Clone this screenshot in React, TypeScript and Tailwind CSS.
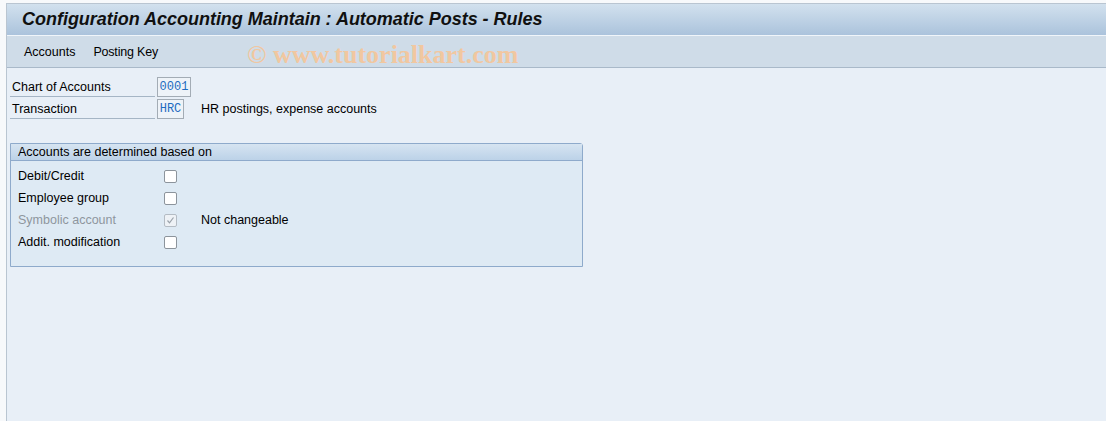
import React from "react";

const font = { fontFamily: '"Liberation Sans", Arial, sans-serif' };

function Check({ checked, disabled }: { checked?: boolean; disabled?: boolean }) {
  return (
    <div
      className={`w-[13px] h-[13px] rounded-[2px] border flex items-center justify-center ${
        disabled ? "border-[#b4bcc4] bg-[#eef2f6]" : "border-[#8c949c] bg-white"
      }`}
    >
      {checked && (
        <svg width="9" height="9" viewBox="0 0 9 9">
          <path d="M1.5 4.5 L3.5 6.8 L7.5 1.5" fill="none" stroke="#9aa2aa" strokeWidth="1.2" />
        </svg>
      )}
    </div>
  );
}

export default function App() {
  const rows = [
    { label: "Debit/Credit", checked: false },
    { label: "Employee group", checked: false },
    { label: "Symbolic account", checked: true, disabled: true, note: "Not changeable" },
    { label: "Addit. modification", checked: false },
  ];
  return (
    <div className="w-[1106px] h-[421px] bg-white overflow-hidden flex text-[12.5px] text-black" style={font}>
      <div className="w-[6px] bg-[#f7f9fb]" />
      <div className="flex-1 flex flex-col pt-[3px] bg-[#f7f9fb]">
        <div className="flex-1 flex flex-col border-t border-l border-[#b9c5d1]">
          <div className="h-[31px] bg-gradient-to-b from-[#d2e1ee] to-[#abc3dc] flex items-center pl-[15px]">
            <span className="text-[18px] font-bold italic text-[#101010] tracking-[-0.02px]">
              Configuration Accounting Maintain : Automatic Posts - Rules
            </span>
          </div>
          <div className="h-px bg-[#f0f5fa]" />
          <div className="h-[32px] bg-[#cfdce8] border-b border-[#a9b9c9] flex items-center pl-[17px] relative">
            <span className="pt-[2px]">Accounts</span>
            <span className="ml-[18px] pt-[2px] tracking-[-0.2px]">Posting Key</span>
            <span
              className="absolute left-[240px] top-[-1px] text-[26px] font-bold text-[#f1c7a0]"
              style={{ fontFamily: '"Liberation Serif", "Times New Roman", serif' }}
            >
              © www.tutorialkart.com
            </span>
          </div>
          <div className="flex-1 bg-[#e8eff7] pl-[3px] pt-[9px]">
            <div className="flex flex-col gap-[2px]">
              <div className="flex items-center h-[20px]">
                <div className="w-[145px] h-[20px] border-b border-[#a5b5c5] pl-[2px] flex items-center pt-[1px]">
                  Chart of Accounts
                </div>
                <div
                  className="ml-[2px] w-[34px] h-[20px] border border-[#a3acb5] bg-[#eef3f8] text-[#1e6cc0] flex items-center justify-center text-[12px]"
                  style={{ fontFamily: '"Liberation Mono", "Courier New", monospace' }}
                >
                  0001
                </div>
              </div>
              <div className="flex items-center h-[20px]">
                <div className="w-[145px] h-[20px] border-b border-[#a5b5c5] pl-[2px] flex items-center pt-[1px]">
                  Transaction
                </div>
                <div
                  className="ml-[2px] w-[27px] h-[20px] border border-[#a3acb5] bg-[#eef3f8] text-[#1e6cc0] flex items-center justify-center text-[12px]"
                  style={{ fontFamily: '"Liberation Mono", "Courier New", monospace' }}
                >
                  HRC
                </div>
                <span className="ml-[17px]">HR postings, expense accounts</span>
              </div>
            </div>
            <div className="mt-[24px] w-[573px] h-[124px] border border-[#8eaacb] rounded-tr-[3px] bg-[#deeaf4] flex flex-col">
              <div className="h-[17px] bg-gradient-to-b from-[#d6e4f1] to-[#bcd2e8] border-b border-[#8eaacb] pl-[7px] flex items-center pt-[1px]">
                Accounts are determined based on
              </div>
              <div className="pt-[4px] flex flex-col">
                {rows.map((r) => (
                  <div key={r.label} className="h-[22px] flex items-center">
                    <span className={`w-[153px] pl-[7px] ${r.disabled ? "text-[#8e969e]" : ""}`}>{r.label}</span>
                    <Check checked={r.checked} disabled={r.disabled} />
                    {r.note && <span className="ml-[24px]">{r.note}</span>}
                  </div>
                ))}
              </div>
            </div>
          </div>
        </div>
      </div>
    </div>
  );
}
